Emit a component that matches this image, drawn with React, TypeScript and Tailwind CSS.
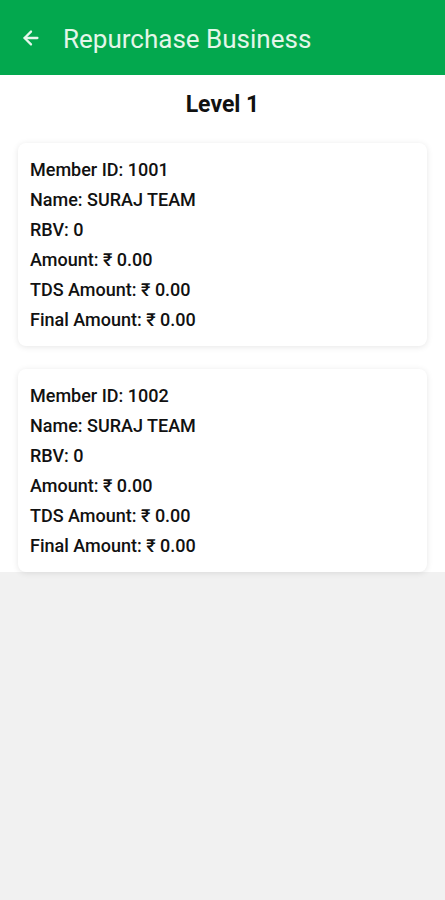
import { ArrowLeft } from "lucide-react";

type Member = {
  id: string;
  name: string;
  rbv: string;
  amount: string;
  tds: string;
  final: string;
};

const members: Member[] = [
  { id: "1001", name: "SURAJ TEAM", rbv: "0", amount: "0.00", tds: "0.00", final: "0.00" },
  { id: "1002", name: "SURAJ TEAM", rbv: "0", amount: "0.00", tds: "0.00", final: "0.00" },
];

function MemberCard({ m }: { m: Member }) {
  const rows = [
    `Member ID: ${m.id}`,
    `Name: ${m.name}`,
    `RBV: ${m.rbv}`,
    `Amount: ₹ ${m.amount}`,
    `TDS Amount: ₹ ${m.tds}`,
    `Final Amount: ₹ ${m.final}`,
  ];
  return (
    <div className="mx-[18px] rounded-lg bg-white px-3 pb-[11px] pt-[12px] shadow-[0_1px_6px_rgba(0,0,0,0.10)]">
      {rows.map((r) => (
        <p key={r} className="text-[18px] font-medium leading-[30px] text-[#111]">
          {r}
        </p>
      ))}
    </div>
  );
}

export default function App() {
  return (
    <div className="min-h-[900px] bg-[#f1f1f1]" style={{ fontFamily: "Roboto, 'Noto Sans', sans-serif" }}>
      {/* Top app bar */}
      <header className="flex h-[75px] items-center bg-[#03a84e] px-[20px] shadow-[0_1px_3px_rgba(0,0,0,0.2)]">
        <ArrowLeft className="h-[22px] w-[22px] text-[#e6f7ec]" strokeWidth={2.5} />
        <h1 className="ml-[21px] pt-[2px] text-[26px] leading-none text-[#e3f6e9]">Repurchase Business</h1>
      </header>

      {/* List */}
      <div className="bg-white">
        <h2 className="pt-[17px] text-center text-[23px] font-bold leading-[26px] text-[#111]">Level 1</h2>
        <div className="mt-[25px] flex flex-col gap-[23px]">
          {members.map((m) => (
            <MemberCard key={m.id} m={m} />
          ))}
        </div>
      </div>
    </div>
  );
}
